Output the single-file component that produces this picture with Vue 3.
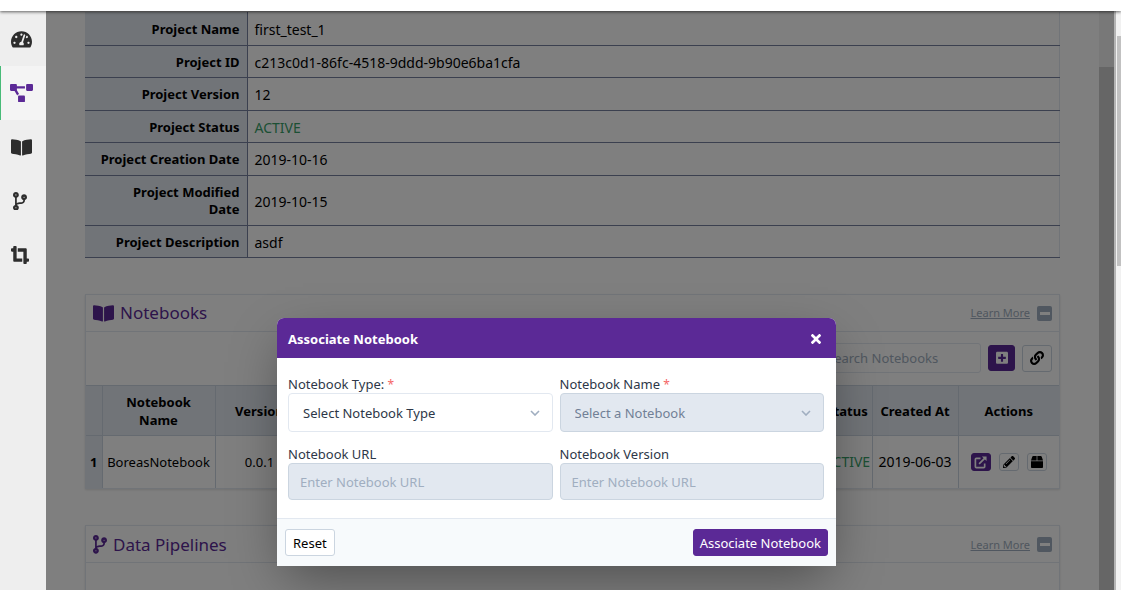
<script setup>
import { ref } from 'vue'

const icons = {
  gauge: { box: '0 0 576 512', d: 'M288 32C128.94 32 0 160.94 0 320c0 52.8 14.25 102.26 39.06 144.8 5.61 9.62 16.3 15.2 27.44 15.2h443c11.14 0 21.83-5.58 27.44-15.2C561.75 422.26 576 372.8 576 320c0-159.06-128.94-288-288-288zm0 64c14.71 0 26.58 10.13 30.32 23.65-1.11 2.26-2.64 4.23-3.45 6.67l-9.22 27.67c-5.13 3.49-10.97 6.01-17.64 6.01-17.67 0-32-14.33-32-32S270.33 96 288 96zM96 384c-17.67 0-32-14.33-32-32s14.33-32 32-32 32 14.33 32 32-14.33 32-32 32zm48-160c-17.67 0-32-14.33-32-32s14.33-32 32-32 32 14.33 32 32-14.33 32-32 32zm246.77-72.41l-61.33 184C343.13 347.33 352 364.54 352 384c0 11.72-3.38 22.55-8.88 32H232.88c-5.5-9.45-8.88-20.28-8.88-32 0-33.94 26.5-61.43 59.9-63.59l61.34-184.01c4.17-12.56 17.73-19.45 30.36-15.17 12.57 4.19 19.35 17.79 15.17 30.36zm14.66 57.2l15.52-46.55c3.47-1.29 7.13-2.23 11.05-2.23 17.67 0 32 14.33 32 32s-14.33 32-32 32c-11.38-.01-20.89-6.28-26.57-15.22zM480 384c-17.67 0-32-14.33-32-32s14.33-32 32-32 32 14.33 32 32-14.33 32-32 32z' },
  diagram: { box: '0 0 640 512', d: 'M384 320H256c-17.67 0-32 14.33-32 32v128c0 17.67 14.33 32 32 32h128c17.67 0 32-14.33 32-32V352c0-17.67-14.33-32-32-32zM192 32c0-17.67-14.33-32-32-32H32C14.33 0 0 14.33 0 32v128c0 17.67 14.33 32 32 32h95.72l73.16 128.04C211.98 300.98 232.4 288 256 288h.28L192 175.51V128h224V64H192V32zM608 0H480c-17.67 0-32 14.33-32 32v128c0 17.67 14.33 32 32 32h128c17.67 0 32-14.33 32-32V32c0-17.67-14.33-32-32-32z' },
  book: { box: '0 0 576 512', d: 'M542.22 32.05c-54.8 3.11-163.72 14.43-230.96 55.59-4.64 2.84-7.27 7.89-7.27 13.17v363.87c0 11.55 12.63 18.85 23.28 13.49 69.18-34.82 169.23-44.32 218.7-46.92 16.89-.89 30.02-14.43 30.02-30.66V62.75c.01-17.71-15.35-31.74-33.77-30.7zM264.73 87.64C197.5 46.48 88.58 35.17 33.78 32.05 15.36 31.01 0 45.04 0 62.75V400.6c0 16.24 13.13 29.78 30.02 30.66 49.49 2.6 149.59 12.11 218.77 46.95 10.62 5.35 23.21-1.94 23.21-13.46V100.63c0-5.29-2.62-10.14-7.27-12.99z' },
  branch: { box: '0 0 384 512', d: 'M384 144c0-44.2-35.8-80-80-80s-80 35.8-80 80c0 36.4 24.3 67.1 57.5 76.8-.6 16.1-4.2 28.5-11 36.9-15.4 19.2-49.3 22.4-85.2 25.7-28.2 2.6-57.4 5.4-81.3 16.9v-144c32.5-10.2 56-40.5 56-76.3 0-44.2-35.8-80-80-80S0 35.8 0 80c0 35.8 23.5 66.1 56 76.3v199.3C23.5 365.9 0 396.2 0 432c0 44.2 35.8 80 80 80s80-35.8 80-80c0-34-21.2-63.1-51.2-74.6 3.1-5.2 7.8-9.8 14.9-13.4 16.2-8.2 40.4-10.4 66.1-12.8 42.2-3.9 90-8.4 118.2-43.4 14-17.4 21.1-39.8 21.6-67.9 31.6-10.8 54.4-40.7 54.4-75.9zM80 64c8.8 0 16 7.2 16 16s-7.2 16-16 16-16-7.2-16-16 7.2-16 16-16zm0 384c-8.8 0-16-7.2-16-16s7.2-16 16-16 16 7.2 16 16-7.2 16-16 16zm224-320c8.8 0 16 7.2 16 16s-7.2 16-16 16-16-7.2-16-16 7.2-16 16-16z' },
  crop: { box: '0 0 512 512', d: 'M488 352h-40V96c0-17.67-14.33-32-32-32H192v96h160v328c0 13.25 10.75 24 24 24h48c13.25 0 24-10.75 24-24v-40h40c13.25 0 24-10.75 24-24v-48c0-13.26-10.75-24-24-24zM160 24c0-13.26-10.75-24-24-24H88C74.75 0 64 10.74 64 24v40H24C10.75 64 0 74.74 0 88v48c0 13.25 10.75 24 24 24h40v256c0 17.67 14.33 32 32 32h224v-96H160V24z' },
}

const nav = [
  { icon: 'gauge', label: 'Dashboard' },
  { icon: 'diagram', label: 'Projects' },
  { icon: 'book', label: 'Notebooks' },
  { icon: 'branch', label: 'Pipelines' },
  { icon: 'crop', label: 'Models' },
]

const project = [
  ['Project Name', 'first_test_1'],
  ['Project ID', 'c213c0d1-86fc-4518-9ddd-9b90e6ba1cfa'],
  ['Project Version', '12'],
  ['Project Status', 'ACTIVE'],
  ['Project Creation Date', '2019-10-16'],
  ['Project Modified\nDate', '2019-10-15'],
  ['Project Description', 'asdf'],
]

const notebookType = ref('')
const notebookName = ref('')
</script>

<template>
  <div class="page">
    <header class="topbar"></header>
    <div class="workspace">
      <nav class="sidebar" aria-label="Main">
        <a v-for="n in nav" :key="n.icon" href="#" :aria-label="n.label" :class="['nav-item', { active: n.icon === 'diagram' }]">
          <svg :viewBox="icons[n.icon].box" :class="'nav-' + n.icon"><path :d="icons[n.icon].d" /></svg>
        </a>
      </nav>

      <main class="content">
        <table class="details">
          <tbody>
            <tr v-for="[k, v] in project" :key="k">
              <th scope="row">{{ k }}</th>
              <td :class="{ ok: v === 'ACTIVE' }">{{ v }}</td>
            </tr>
          </tbody>
        </table>

        <section class="card">
          <div class="card-head">
            <svg class="head-book" :viewBox="icons.book.box"><path :d="icons.book.d" /></svg>
            <h2>Notebooks</h2>
            <a href="#" class="more">Learn More</a>
            <button class="collapse" aria-label="Collapse Notebooks"><span></span></button>
          </div>
          <div class="toolbar">
            <input class="search" type="search" aria-label="Search Notebooks" placeholder="Search Notebooks" />
            <button class="tool primary" aria-label="Add notebook">
              <svg viewBox="0 0 448 512" class="i-plus"><path d="M400 32H48C21.5 32 0 53.5 0 80v352c0 26.5 21.5 48 48 48h352c26.5 0 48-21.5 48-48V80c0-26.5-21.5-48-48-48zm-32 252c0 6.6-5.4 12-12 12h-92v92c0 6.6-5.4 12-12 12h-56c-6.6 0-12-5.4-12-12v-92H92c-6.6 0-12-5.4-12-12v-56c0-6.6 5.4-12 12-12h92v-92c0-6.6 5.4-12 12-12h56c6.6 0 12 5.4 12 12v92h92c6.6 0 12 5.4 12 12v56z" /></svg>
            </button>
            <button class="tool link" aria-label="Associate notebook">
              <svg viewBox="0 0 512 512" class="i-link"><path d="M326.612 185.391c59.747 59.809 58.927 155.698.36 214.59-.11.12-.24.25-.36.37l-67.2 67.2c-59.27 59.27-155.699 59.262-214.96 0-59.27-59.26-59.27-155.7 0-214.96l37.106-37.106c9.84-9.84 26.786-3.3 27.294 10.606.648 17.722 3.826 35.527 9.69 52.721 1.986 5.822.567 12.262-3.783 16.612l-13.087 13.087c-28.026 28.026-28.905 73.66-1.155 101.96 28.024 28.579 74.086 28.749 102.325.51l67.2-67.19c28.191-28.191 28.073-73.757 0-101.83-3.701-3.694-7.429-6.564-10.341-8.569a16.037 16.037 0 0 1-6.947-12.606c-.396-10.567 3.348-21.456 11.698-29.806l21.054-21.055c5.521-5.521 14.182-6.199 20.584-1.731a152.482 152.482 0 0 1 20.522 17.197zM467.547 44.449c-59.261-59.262-155.69-59.27-214.96 0l-67.2 67.2c-.12.12-.25.25-.36.37-58.566 58.892-59.387 154.781.36 214.59a152.454 152.454 0 0 0 20.521 17.196c6.402 4.468 15.064 3.789 20.584-1.731l21.054-21.055c8.35-8.35 12.094-19.239 11.698-29.806a16.037 16.037 0 0 0-6.947-12.606c-2.912-2.005-6.64-4.875-10.341-8.569-28.073-28.073-28.191-73.639 0-101.83l67.2-67.19c28.239-28.239 74.3-28.069 102.325.51 27.75 28.3 26.872 73.934-1.155 101.96l-13.087 13.087c-4.35 4.35-5.769 10.79-3.783 16.612 5.864 17.194 9.042 34.999 9.69 52.721.509 13.906 17.454 20.446 27.294 10.606l37.106-37.106c59.271-59.259 59.271-155.699.001-214.959z" /></svg>
            </button>
          </div>
          <table class="grid">
            <colgroup>
              <col class="c-num" /><col class="c-name" /><col class="c-ver" /><col />
              <col class="c-status" /><col class="c-date" /><col class="c-act" />
            </colgroup>
            <thead>
              <tr><th></th><th>Notebook Name</th><th>Version</th><th></th><th>Status</th><th>Created At</th><th>Actions</th></tr>
            </thead>
            <tbody>
              <tr>
                <th scope="row">1</th>
                <td>BoreasNotebook</td>
                <td>0.0.1</td>
                <td></td>
                <td class="ok large">ACTIVE</td>
                <td class="large">2019-06-03</td>
                <td>
                  <div class="actions">
                    <button class="mini primary" aria-label="Open">
                      <svg viewBox="0 0 14 14" class="i-open"><path d="M7 2.500H2.500Q1.500 2.500 1.500 3.500V11.500Q1.500 12.500 2.500 12.500H10.500Q11.500 12.500 11.500 11.500V8M5.500 8.500L12 2" /><path class="solid" d="M8.500 .5H13.500V5.500Z" /></svg>
                    </button>
                    <button class="mini" aria-label="Edit">
                      <svg viewBox="0 0 512 512" class="i-edit"><path d="M497.9 142.1l-46.1 46.1c-4.7 4.7-12.3 4.7-17 0l-111-111c-4.7-4.7-4.7-12.3 0-17l46.1-46.1c18.7-18.7 49.1-18.7 67.9 0l60.1 60.1c18.8 18.7 18.8 49.1 0 67.9zM284.2 99.8L21.6 362.4.4 483.9c-2.9 16.4 11.4 30.6 27.8 27.8l121.5-21.3 262.6-262.6c4.7-4.7 4.7-12.3 0-17l-111-111c-4.8-4.7-12.4-4.7-17.1 0zM124.1 339.9c-5.5-5.5-5.5-14.3 0-19.8l154-154c5.5-5.5 14.3-5.5 19.8 0s5.5 14.3 0 19.8l-154 154c-5.5 5.5-14.3 5.5-19.8 0zM88 424h48v36.300l-64.500 11.300-31.100-31.100L51.700 376H88v48z" /></svg>
                    </button>
                    <button class="mini" aria-label="Archive">
                      <svg viewBox="0 0 512 512" class="i-box"><path d="M509.500 184.600L458.900 32.800C452.400 13.200 434.100 0 413.400 0H272v192h238.700c-.4-2.500-.4-5-1.200-7.400zM240 0H98.600c-20.700 0-39 13.200-45.500 32.800L2.500 184.600c-.8 2.400-.8 4.900-1.200 7.400H240V0zM0 224v240c0 26.500 21.500 48 48 48h416c26.500 0 48-21.500 48-48V224H0z" /></svg>
                    </button>
                  </div>
                </td>
              </tr>
            </tbody>
          </table>
        </section>

        <section class="card">
          <div class="card-head">
            <svg class="head-branch" :viewBox="icons.branch.box"><path :d="icons.branch.d" /></svg>
            <h2>Data Pipelines</h2>
            <a href="#" class="more">Learn More</a>
            <button class="collapse" aria-label="Collapse Data Pipelines"><span></span></button>
          </div>
          <div class="toolbar"></div>
        </section>
      </main>
      <div class="inner-scroll"><div class="inner-thumb"></div></div>
      <div class="outer-scroll"><div class="outer-thumb"></div></div>
    </div>

    <div class="backdrop">
      <form class="modal" role="dialog" aria-labelledby="dialog-title" @submit.prevent>
        <div class="modal-head">
          <h3 id="dialog-title">Associate Notebook</h3>
          <button type="button" class="close" aria-label="Close">
            <svg viewBox="0 0 352 352"><path transform="translate(0 -80)" d="M242.720 256l100.070-100.070c12.280-12.280 12.280-32.190 0-44.480l-22.240-22.240c-12.280-12.280-32.190-12.280-44.480 0L176 189.280 75.930 89.210c-12.280-12.280-32.190-12.280-44.480 0L9.210 111.450c-12.280 12.280-12.280 32.190 0 44.480L109.280 256 9.210 356.070c-12.280 12.280-12.280 32.190 0 44.480l22.240 22.240c12.280 12.280 32.200 12.280 44.480 0L176 322.720l100.070 100.070c12.280 12.280 32.200 12.280 44.480 0l22.240-22.240c12.280-12.280 12.280-32.190 0-44.480L242.720 256z" /></svg>
          </button>
        </div>
        <div class="modal-body">
          <div class="field">
            <label for="nb-type">Notebook Type: <span class="req">*</span></label>
            <div class="select-wrap">
              <select id="nb-type" v-model="notebookType"><option value="">Select Notebook Type</option></select>
              <svg class="chevron" viewBox="0 0 10 6"><path d="M1 1L5 5L9 1" /></svg>
            </div>
          </div>
          <div class="field">
            <label for="nb-name">Notebook Name <span class="req">*</span></label>
            <div class="select-wrap">
              <select id="nb-name" v-model="notebookName" disabled><option value="">Select a Notebook</option></select>
              <svg class="chevron" viewBox="0 0 10 6"><path d="M1 1L5 5L9 1" /></svg>
            </div>
          </div>
          <div class="field">
            <label for="nb-url">Notebook URL</label>
            <input id="nb-url" type="text" placeholder="Enter Notebook URL" disabled />
          </div>
          <div class="field">
            <label for="nb-version">Notebook Version</label>
            <input id="nb-version" type="text" placeholder="Enter Notebook URL" disabled />
          </div>
        </div>
        <div class="modal-foot">
          <button type="button" class="btn">Reset</button>
          <button type="submit" class="btn primary">Associate Notebook</button>
        </div>
      </form>
    </div>
  </div>
</template>

<style>
body { background: #fff; overflow: hidden; }
</style>

<style scoped>
* { box-sizing: border-box; }
.page {
  position: relative;
  display: flex;
  flex-direction: column;
  height: 100vh;
  overflow: hidden;
  font: 13px/18px "Noto Sans", "Open Sans", sans-serif;
  color: #000;
}
button, input, select { font: inherit; color: inherit; margin: 0; }
button { padding: 0; display: flex; align-items: center; justify-content: center; cursor: pointer; }
svg { display: block; fill: currentColor; }

.topbar { position: relative; z-index: 3; flex: none; height: 11px; background: #fff; box-shadow: 0 1px 3px rgba(0, 0, 0, .6); }
.workspace { flex: 1; min-height: 0; display: flex; }
.sidebar { position: relative; z-index: 2; flex: none; width: 46px; padding-top: 1px; background: #eee; }
.nav-item { display: flex; align-items: center; justify-content: center; height: 54px; padding-right: 5px; border-left: 1px solid transparent; color: #2d2d2d; }
.nav-item.active { background: #f4f4f4; border-left-color: #48bb78; color: #5b2996; }
.nav-gauge, .nav-book { width: 21px; }
.nav-diagram { width: 23px; }
.nav-branch { width: 14px; margin-right: 2px; }
.nav-crop { width: 18px; margin-right: 2px; }

.content { flex: 1; min-width: 0; overflow: hidden; padding: 1px 39px 0; }
table { width: 100%; border-collapse: collapse; table-layout: fixed; }
.details th, .details td { height: 32px; padding: 8px 7px 6px; border-bottom: 1px solid #77809f; line-height: 17px; }
.details tr:nth-child(2n + 1):not(:last-child) th { height: 33px; }
.details tr:nth-child(6) th { height: 50px; }
.details th { width: 162px; text-align: right; white-space: pre-line; background: #e2e8f0; border-right: 1px solid #77809f; }
.details td { border-right: 1px solid #e2e8f0; font-size: 14px; }
.details .ok, .grid .ok { color: #38a169; }

.card { margin-top: 36px; border: 1px solid #e2e8f0; box-shadow: 0 1px 2px rgba(0, 0, 0, .12); }
.card-head { display: flex; align-items: center; height: 37px; padding: 1px 7px 0; border-bottom: 1px solid #e2e8f0; color: #5b2996; }
.card-head h2 { margin: 0 auto 0 6px; font-size: 17px; line-height: 24px; font-weight: 400; }
.head-book { width: 21px; }
.head-branch { width: 14px; }
.more { font-size: 11px; color: #a0aec0; }
.collapse { width: 15px; height: 15px; margin-left: 7px; border: 0; border-radius: 2px; background: #a0aec0; }
.collapse span { width: 10px; height: 3px; background: #fff; }
.toolbar { display: flex; align-items: center; justify-content: flex-end; gap: 7px; height: 53px; padding: 0 7px; }
.search { width: 166px; height: 30px; padding: 0 11px; border: 1px solid #e2e8f0; border-radius: 3px; background: #fff; outline: none; }
.search::placeholder { color: #a0aec0; opacity: 1; }
.tool { height: 26px; width: 27px; border: 1px solid #cbd5e0; border-radius: 3px; background: #fff; }
.tool.link { width: 30px; height: 27px; }
.tool.primary, .mini.primary, .btn.primary { background: #5b2996; border-color: #5b2996; color: #fff; }
.i-plus { width: 12px; }
.i-link { width: 14px; }

.grid th, .grid td { border: 1px solid #cbd5e0; padding: 1px 4px 0; text-align: center; white-space: nowrap; }
.grid thead th { height: 50px; white-space: normal; }
.grid td { height: 53px; }
.grid td.large { padding: 1px 1px 0; font-size: 14px; }
.grid th { background: #e2e8f0; }
.grid tr > :first-child { border-left: 0; }
.grid tr > :last-child { border-right: 0; }
.grid tbody tr > * { border-bottom: 0; }
.c-num { width: 16px; }
.c-name { width: 113px; }
.c-ver { width: 89px; }
.c-status { width: 50px; }
.c-date { width: 86px; }
.c-act { width: 101px; }
.actions { display: flex; justify-content: center; gap: 8px; }
.mini { width: 20px; height: 18px; border: 1px solid #cbd5e0; border-radius: 3px; background: #fff; }
.i-open { width: 13px; fill: none; stroke: currentColor; stroke-width: 1.8; }
.i-open .solid { fill: currentColor; stroke: none; }
.i-edit { width: 12px; }
.i-box { width: 12px; }

.inner-scroll { flex: none; width: 15px; padding-top: 56px; background: #f1f1f1; }
.inner-thumb { height: 100%; background: #cdcdcd; }
.outer-scroll { position: relative; z-index: 2; flex: none; width: 7px; padding-top: 25px; border-left: 2px solid #b4b4b4; background: #f1f1f1; }
.outer-thumb { height: 230px; margin-left: 1px; background: #c1c1c1; }

.backdrop { position: absolute; inset: 0 7px 0 0; z-index: 1; display: flex; justify-content: center; align-items: flex-start; padding: 318px 1px 0 0; background: rgba(0, 0, 0, .5); }
.modal { width: 50%; min-width: 559px; overflow: hidden; border-radius: 7px 7px 0 0; background: #fff; color: #2d3748; box-shadow: 0 18px 50px -8px rgba(0, 0, 0, .4); }
.modal-head { display: flex; align-items: center; justify-content: space-between; height: 40px; padding: 2px 15px 0 11px; background: #5b2996; color: #fff; }
.modal-head h3 { margin: 0; font-size: 13px; line-height: 18px; }
.close { border: 0; background: none; }
.close svg { width: 10px; }
.modal-body { display: grid; grid-template-columns: 1fr 1fr; gap: 14px 7px; padding: 18px 12px 18px 11px; }
.field label { display: block; line-height: 17px; }
.req { color: #f56565; font-size: 12px; }
.select-wrap { position: relative; }
.field select { display: block; width: 100%; height: 39px; padding: 0 14px; border: 1px solid #e2e8f0; border-radius: 4px; background: #fff; appearance: none; opacity: 1; }
.field select:disabled { background: #e2e8f0; border-color: #cbd5e0; color: #718096; }
.chevron { position: absolute; right: 13px; top: 17px; width: 10px; fill: none; stroke: #a0aec0; stroke-width: 1.6; }
.field input { display: block; width: 100%; height: 37px; padding: 0 11px; border: 1px solid #cbd5e0; border-radius: 4px; background: #e2e8f0; }
.field input::placeholder { color: #a0aec0; opacity: 1; }
.modal-foot { display: flex; justify-content: space-between; padding: 10px 8px; border-top: 1px solid #e2e8f0; background: #f7fafc; }
.btn { height: 27px; padding: 0 7px; border: 1px solid #cbd5e0; border-radius: 3px; background: #fff; color: #000; }
.btn.primary { padding: 0 6px; }
</style>
